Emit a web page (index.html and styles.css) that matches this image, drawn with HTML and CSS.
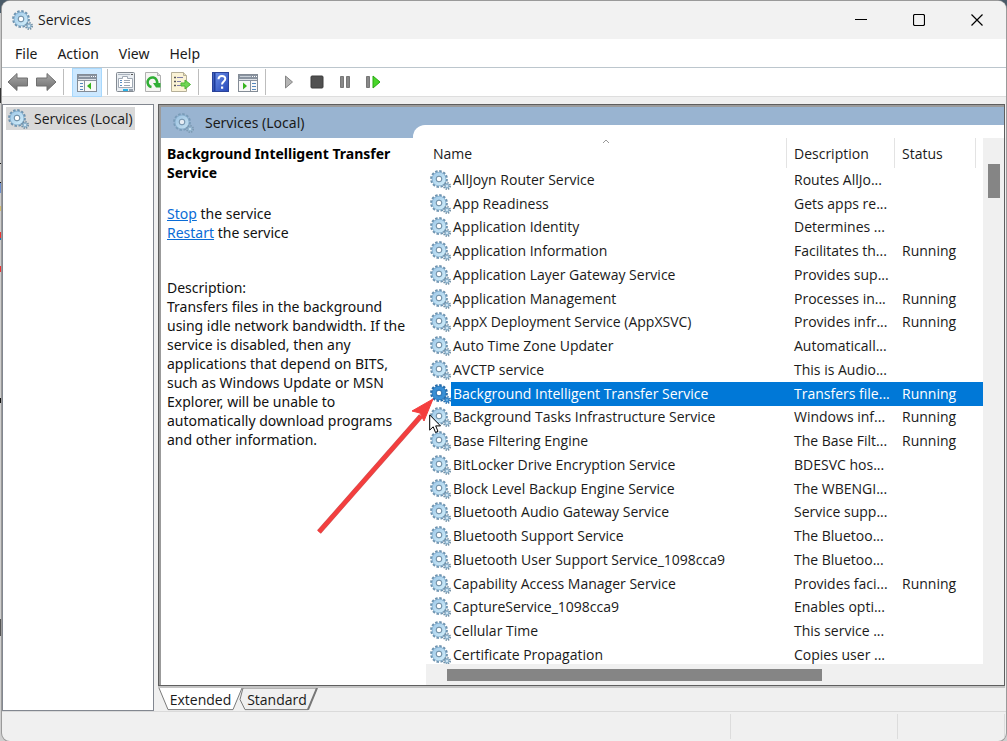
FILE: index.html
```html
<!DOCTYPE html>
<html lang="en">
<head>
<meta charset="UTF-8">
<meta name="viewport" content="width=device-width, initial-scale=1.0">
<title>Services</title>
<link rel="stylesheet" href="styles.css">
</head>
<body>
<svg class="defs" aria-hidden="true">
    <defs>
        <symbol id="gears" viewBox="0 0 21 20">
            <circle cx="9" cy="9" r="7.6" fill="none" stroke="#6f94b0" stroke-width="2.6" stroke-dasharray="2.4 1.58"/>
            <circle cx="9" cy="9" r="5" fill="none" stroke="#7fabcb" stroke-width="4.6"/>
            <circle cx="9" cy="9" r="4.9" fill="none" stroke="url(#ice)" stroke-width="3.4"/>
            <circle cx="9" cy="9" r="2.8" fill="#fff" stroke="#6888a0" stroke-width="1"/>
            <circle cx="17" cy="16" r="3" fill="none" stroke="#6f8da3" stroke-width="2" stroke-dasharray="1.3 1.05"/>
            <circle cx="17" cy="16" r="1.8" fill="#dceefa" stroke="#8fb4cd" stroke-width="1.4"/>
        </symbol>
        <symbol id="gears-selected" viewBox="0 0 21 20">
            <circle cx="9" cy="9" r="7.6" fill="none" stroke="#286ca9" stroke-width="2.6" stroke-dasharray="2.4 1.58"/>
            <circle cx="9" cy="9" r="5" fill="none" stroke="#2574b8" stroke-width="4.6"/>
            <circle cx="9" cy="9" r="4.9" fill="none" stroke="#3a8fd4" stroke-width="3.4"/>
            <circle cx="9" cy="9" r="2.8" fill="#fff" stroke="#1f69ac" stroke-width="1"/>
            <circle cx="17" cy="16" r="3" fill="none" stroke="#286ca9" stroke-width="2" stroke-dasharray="1.3 1.05"/>
            <circle cx="17" cy="16" r="1.8" fill="#6fb0e4" stroke="#3586c9" stroke-width="1.4"/>
        </symbol>
        <linearGradient id="ice" x1="0" y1="0" x2="1" y2="1">
            <stop offset="0" stop-color="#a5cdea"/>
            <stop offset="1" stop-color="#cdeaf8"/>
        </linearGradient>
        <linearGradient id="steel" x1="0" y1="0" x2="0" y2="1">
            <stop offset="0" stop-color="#a8a8a8"/>
            <stop offset="1" stop-color="#6e6e6e"/>
        </linearGradient>
        <linearGradient id="book" x1="0" y1="0" x2="1" y2="1">
            <stop offset="0" stop-color="#6f93ea"/>
            <stop offset="1" stop-color="#2547b8"/>
        </linearGradient>
    </defs>
</svg>
<div class="window">
    <header class="titlebar">
        <svg class="gear"><use href="#gears"/></svg>
        <h1>Services</h1>
        <div class="window-buttons">
            <button aria-label="Minimize"><svg width="12" height="12"><path d="M0 5.500h12" stroke="#000"/></svg></button>
            <button aria-label="Maximize"><svg width="12" height="12"><rect x=".5" y=".5" width="11" height="11" rx="1.5" fill="none" stroke="#000" stroke-width="1.2"/></svg></button>
            <button aria-label="Close"><svg width="12" height="12"><path d="M.5.5l11 11M11.500.5l-11 11" stroke="#000" stroke-width="1.2"/></svg></button>
        </div>
    </header>
    <nav class="menubar">
        <button>File</button>
        <button>Action</button>
        <button>View</button>
        <button>Help</button>
    </nav>
    <div class="toolbar">
        <button aria-label="Back"><svg width="22" height="20"><path d="M1 10L10 1.500V6h10.500v8H10v4.500z" fill="url(#steel)" stroke="#707070"/></svg></button>
        <button aria-label="Forward"><svg width="22" height="20"><path d="M21 10L12 1.500V6H1.500v8H12v4.500z" fill="url(#steel)" stroke="#707070"/></svg></button>
        <span class="divider"></span>
        <button class="pressed" aria-label="Show/Hide Console Tree">
            <svg width="20" height="18">
                <rect x=".5" y=".5" width="19" height="17" fill="#f8f8f8" stroke="#848c96"/>
                <path d="M1 1h18v6H1z" fill="#8993a0"/>
                <path d="M2 2.500h11" stroke="#c9d0d8" stroke-width="1"/>
                <path d="M14 2.500h1M16 2.500h1M18 2.500h1" stroke="#fff"/>
                <path d="M1 5.500h18" stroke="#dfe3e8"/>
                <path d="M7.500 7v10" stroke="#8993a0"/>
                <path d="M3 9.500h3M3 12.500h3M3 15.500h3" stroke="#5588bd"/>
                <path d="M14 8.500v7l-4-3.500z" fill="#36b41d"/>
            </svg>
        </button>
        <span class="divider"></span>
        <button aria-label="Properties">
            <svg width="19" height="20">
                <rect x=".5" y=".5" width="18" height="19" rx="1" fill="#e9edf1" stroke="#838a92"/>
                <path d="M2 2.500h12" stroke="#aab3bd"/>
                <path d="M15 2.500h2" stroke="#555"/>
                <path d="M2.500 6.500h4v-2h5v2h5v9h-14z" fill="#fff" stroke="#a0a9b4"/>
                <path d="M8 8.500h6M8 10.500h6M8 13.500h6" stroke="#9ca6b2"/>
                <path d="M4 8.500h2M4 10.500h2M4 13.500h2" stroke="#5a8fc4"/>
                <path d="M7 18h5" stroke="#28b3e8" stroke-width="2"/>
                <path d="M13 18h4" stroke="#98a2ae" stroke-width="2"/>
            </svg>
        </button>
        <button aria-label="Refresh">
            <svg width="18" height="20">
                <path d="M1.500.5h12l3 3v16h-15z" fill="#f5f5f2" stroke="#b0b0b0"/>
                <path d="M13.500.5v3h3" fill="#ddd" stroke="#b0b0b0"/>
                <path d="M7.500 15A4.800 4.800 0 1 1 13 11.500" fill="none" stroke="#2fae34" stroke-width="2.600"/>
                <path d="M9 11h7.500v4.500H12z" fill="#2fae34"/>
            </svg>
        </button>
        <button aria-label="Export List">
            <svg width="20" height="20">
                <path d="M.5.5h12l3 3v16H.5z" fill="#fbf3d6" stroke="#b5af98"/>
                <path d="M12.500.5v3h3" fill="#e5dcb8" stroke="#b5af98"/>
                <path d="M3 5.500h2M3 9.500h2M3 13.500h2" stroke="#555" stroke-width="1.500"/>
                <path d="M6 5.500h6M6 9.500h4M6 13.500h4" stroke="#7d7ba8"/>
                <path d="M10 11h4V8l5.500 4.500L14 17v-3h-4z" fill="#6fd654" stroke="#4ab533"/>
            </svg>
        </button>
        <span class="divider"></span>
        <button class="help" aria-label="Help">
            <svg width="17" height="20">
                <rect x=".5" y=".5" width="16" height="19" fill="url(#book)" stroke="#2a439a"/>
                <path d="M2.500 1v18" stroke="#1f3c9b" stroke-width="2"/>
                <path d="M6.500 7.200c0-4.300 6.800-4.300 6.800-.4 0 2.700-3.300 2.800-3.300 5.700" fill="none" stroke="#fff" stroke-width="2"/>
                <path d="M9 14.500h2.200v2.200H9z" fill="#fff"/>
            </svg>
        </button>
        <button class="action-pane" aria-label="Show/Hide Action Pane">
            <svg width="20" height="18">
                <rect x=".5" y=".5" width="19" height="17" fill="#f8f8f8" stroke="#848c96"/>
                <path d="M1 1h18v6H1z" fill="#8993a0"/>
                <path d="M2 2.500h11" stroke="#c9d0d8"/>
                <path d="M14 2.500h1M16 2.500h1M18 2.500h1" stroke="#fff"/>
                <path d="M1 5.500h18" stroke="#dfe3e8"/>
                <path d="M12.500 7v10" stroke="#8993a0"/>
                <path d="M14 9.500h4M14 12.500h4M14 15.500h4" stroke="#5588bd"/>
                <path d="M5 8.500v7l4-3.500z" fill="#36b41d"/>
            </svg>
        </button>
        <span class="divider"></span>
        <div class="controls">
            <button aria-label="Start Service"><svg width="14" height="14"><path d="M3.500 1l7 6-7 6z" fill="#b5b5b5" stroke="#858585"/></svg></button>
            <button aria-label="Stop Service"><svg width="14" height="14"><rect x="1" y="1" width="12" height="12" rx="1" fill="#505050" stroke="#3c3c3c"/></svg></button>
            <button aria-label="Pause Service"><svg width="14" height="14"><path d="M2.500 1.500h3v11h-3zM8.500 1.500h3v11h-3z" fill="#888" stroke="#777"/></svg></button>
            <button aria-label="Restart Service"><svg width="16" height="14"><path d="M1.500 1.500h3v11h-3z" fill="#888" stroke="#777"/><path d="M8 1l7 6-7 6z" fill="#48d629" stroke="#28a813"/></svg></button>
        </div>
    </div>
    <main class="workspace">
        <aside class="tree">
            <button class="tree-item"><svg class="gear"><use href="#gears"/></svg>Services (Local)</button>
        </aside>
        <section class="content">
            <div class="pane">
                <div class="info">
                    <h2 class="banner"><svg class="gear"><use href="#gears"/></svg>Services (Local)</h2>
                    <div class="details">
                        <h3>Background Intelligent Transfer Service</h3>
                        <p><a href="#">Stop</a> the service<br><a href="#">Restart</a> the service</p>
                        <p class="description">Description:<br>Transfers files in the background using idle network bandwidth. If the service is disabled, then any applications that depend on BITS, such as Windows Update or MSN Explorer, will be unable to automatically download programs and other information.</p>
                    </div>
                </div>
                <div class="list-panel">
                    <div class="list">
                        <div class="list-view">
                            <table>
                                <colgroup><col><col class="col-description"><col class="col-status"><col class="col-rest"></colgroup>
                                <thead>
                                    <tr><th class="sorted">Name<svg width="8" height="5"><path d="M1 4l3-3 3 3" fill="none" stroke="#999"/></svg></th><th>Description</th><th>Status</th><th></th></tr>
                                </thead>
                                <tbody id="services"></tbody>
                            </table>
                        </div>
                        <div class="scroll-y"><span></span></div>
                        <div class="scroll-x"><span></span></div>
                    </div>
                </div>
            </div>
            <div class="tabs">
                <button class="tab tab-active"><svg viewBox="0 0 85 25" preserveAspectRatio="none"><path d="M1 0l9 22.500h65L84 0" fill="#fff" stroke="#777"/></svg><span>Extended</span></button>
                <button class="tab"><svg viewBox="0 0 80 25" preserveAspectRatio="none"><path d="M4 0h74l-9 22.500H6L1 12z" fill="#f0f0f0" stroke="#777"/><path d="M78 0l-9 22.500" stroke="#777" stroke-width="2"/></svg><span>Standard</span></button>
            </div>
        </section>
    </main>
    <footer class="statusbar"><span></span><span></span><span></span></footer>
</div>
<svg class="arrow" width="118" height="138"><path d="M2 134L104 18" stroke="#c55" stroke-width="5"/><path d="M2 134L104 18" stroke="#f43e3e" stroke-width="4"/><path d="M116 1L95 13l8 2 4 8z" fill="#f43e3e" stroke="#f43e3e"/></svg>
<svg class="cursor" width="13" height="20"><path d="M.7.900v15.200l3.500-3.300 2.300 5.600 2.500-1-2.300-5.500h4.800z" fill="#fff" stroke="#000"/></svg>

<script>
const services = [
    ['AllJoyn Router Service', 'Routes AllJo...', ''],
    ['App Readiness', 'Gets apps re...', ''],
    ['Application Identity', 'Determines ...', ''],
    ['Application Information', 'Facilitates th...', 'Running'],
    ['Application Layer Gateway Service', 'Provides sup...', ''],
    ['Application Management', 'Processes in...', 'Running'],
    ['AppX Deployment Service (AppXSVC)', 'Provides infr...', 'Running'],
    ['Auto Time Zone Updater', 'Automaticall...', ''],
    ['AVCTP service', 'This is Audio...', ''],
    ['Background Intelligent Transfer Service', 'Transfers file...', 'Running'],
    ['Background Tasks Infrastructure Service', 'Windows inf...', 'Running'],
    ['Base Filtering Engine', 'The Base Filt...', 'Running'],
    ['BitLocker Drive Encryption Service', 'BDESVC hos...', ''],
    ['Block Level Backup Engine Service', 'The WBENGI...', ''],
    ['Bluetooth Audio Gateway Service', 'Service supp...', ''],
    ['Bluetooth Support Service', 'The Bluetoo...', ''],
    ['Bluetooth User Support Service_1098cca9', 'The Bluetoo...', ''],
    ['Capability Access Manager Service', 'Provides faci...', 'Running'],
    ['CaptureService_1098cca9', 'Enables opti...', ''],
    ['Cellular Time', 'This service ...', ''],
    ['Certificate Propagation', 'Copies user ...', '']
];
const selected = 9;

document.getElementById('services').innerHTML = services.map(function(service, i) {
    const icon = i === selected ? 'gears-selected' : 'gears';
    return '<tr' + (i === selected ? ' class="selected"' : '') + '>' +
        '<td><div class="name"><svg class="gear"><use href="#' + icon + '"/></svg>' + service[0] + '</div></td>' +
        '<td>' + service[1] + '</td><td>' + service[2] + '</td><td></td></tr>';
}).join('');
</script>
</body>
</html>
```
FILE: styles.css
```css
* {
    box-sizing: border-box;
}
html, body {
    height: 100%;
    margin: 0;
}
body {
    display: flex;
    padding: 1px 1px 0 2px;
    overflow: hidden;
    font-family: "Open Sans", sans-serif;
    font-size: 14px;
    color: #1a1a1a;
    background: linear-gradient(#4a5b69 13px, #c9c9c9 13px, #c9c9c9 88px, #333 88px, #333 103px, #cfcfcf 103px, #cfcfcf 163px, #111 163px, #111 164px, #cfcfcf 164px, #cfcfcf 182px, #111 182px, #111 183px, #6d8fce 183px, #6d8fce 193px, #cfcfcf 193px, #cfcfcf 206px, #d5bd70 206px, #d5bd70 211px, #cfcfcf 211px, #cfcfcf 232px, #e33 232px, #e33 238px, #27a 238px, #27a 240px, #cfcfcf 240px, #cfcfcf 266px, #e33 266px, #e33 272px, #cfcfcf 272px, #cfcfcf 398px, #111 398px, #111 403px, #cfcfcf 403px, #cfcfcf 619px, #555 619px, #555 636px, #cfcfcf 636px);
}
button {
    padding: 0;
    border: none;
    background: none;
    font: inherit;
    color: inherit;
}
h1, h2, h3, p {
    margin: 0;
    font-size: 14px;
    font-weight: normal;
}
svg {
    display: block;
    flex: none;
}
.defs {
    position: absolute;
    width: 0;
    height: 0;
}
.gear {
    width: 21px;
    height: 20px;
}
.window {
    flex: 1;
    min-width: 0;
    display: flex;
    flex-direction: column;
    overflow: hidden;
    background: #f0f0f0;
    border-radius: 8px;
    box-shadow: 0 0 0 1px #9a9a9a;
}

/* title and menu */
.titlebar {
    display: flex;
    align-items: center;
    height: 38px;
    padding-left: 10px;
    gap: 5px;
    line-height: 18px;
    background: #f2f2f2;
}
.window-buttons {
    display: flex;
    margin-left: auto;
    height: 100%;
}
.window-buttons button {
    display: flex;
    align-items: center;
    justify-content: center;
    width: 58px;
}
.menubar {
    display: flex;
    gap: 20px;
    height: 28px;
    padding: 0 13px;
    background: #fff;
    font-family: "Noto Sans", sans-serif;
}
.toolbar {
    display: flex;
    align-items: center;
    height: 30px;
    padding-left: 5px;
    gap: 6px;
    background: #fff;
    border-top: 1px solid #bcc6cd;
    border-bottom: 1px solid #dedede;
}
.divider {
    width: 1px;
    height: 26px;
    background: #bdbdbd;
}
.toolbar button {
    display: flex;
    align-items: center;
    justify-content: center;
    min-width: 22px;
    height: 27px;
}
.toolbar .pressed {
    width: 28px;
    margin-left: 3px;
    padding-top: 2px;
    background: #cce8ff;
    box-shadow: 0 0 0 1px #a8d8fc;
}
.toolbar .help {
    margin-left: 4px;
}
.toolbar .action-pane {
    padding-top: 2px;
}
.controls {
    display: flex;
    gap: 6px;
    margin-left: 6px;
}

/* panes */
.workspace {
    flex: 1;
    min-height: 0;
    display: flex;
    gap: 4px;
    padding: 7px 0 0;
    border-bottom: 1px solid #dadada;
}
.tree {
    width: 152px;
    padding: 2px 3px;
    background: #fff;
    border: 1px solid #828790;
}
.tree-item {
    display: flex;
    align-items: center;
    gap: 5px;
    height: 23px;
    padding: 0 2px;
    background: #d9d9d9;
}
.content {
    flex: 1;
    min-width: 0;
    display: flex;
    flex-direction: column;
    padding-right: 1px;
}
.pane {
    flex: 1;
    min-height: 0;
    display: flex;
    background: #99b4d1;
    border: 1px solid #5f5f5f;
    box-shadow: inset 2px 2px #9b9b9b;
    padding: 2px 0 0 2px;
}
.info {
    width: 252px;
    display: flex;
    flex-direction: column;
}
.banner {
    display: flex;
    align-items: center;
    gap: 11px;
    height: 31px;
    padding-left: 12px;
    font-family: "Noto Sans", sans-serif;
}
.banner .gear {
    opacity: 0.75;
}
.details {
    flex: 1;
    padding: 6px 6px;
    line-height: 19px;
    font-family: "Noto Sans", sans-serif;
    background: #fff;
    color: #111;
}
.details h3 {
    margin-bottom: 22px;
    font-weight: bold;
    color: #000;
}
.details a {
    color: #0a6cd6;
}
.description {
    margin-top: 36px;
}
.list-panel {
    flex: 1;
    min-width: 0;
    display: flex;
    margin-top: 18px;
    padding: 13px 0 0 13px;
    background: #fff;
    border-top-left-radius: 12px;
}
.list {
    flex: 1;
    min-width: 0;
    display: grid;
    grid-template-columns: 1fr 21px;
    grid-template-rows: 1fr 21px;
    background: #f0f0f0;
}
.list-view {
    min-height: 0;
    overflow: hidden;
    background: #fff;
}
table {
    width: 100%;
    height: calc(100% + 3px);
    table-layout: fixed;
    border-collapse: separate;
    border-spacing: 0;
    line-height: 20px;
}
.col-description {
    width: 108px;
}
.col-status {
    width: 81px;
}
.col-rest {
    width: 7px;
}
th {
    position: relative;
    height: 30px;
    padding: 2px 7px 0;
    font-weight: normal;
    text-align: left;
    border-right: 1px solid #e3e3e3;
}
th:last-child {
    padding: 0;
    border: none;
}
th svg {
    position: absolute;
    top: 1px;
    left: 49%;
}
td {
    padding: 0 0 0 7px;
    white-space: nowrap;
}
td:first-child {
    padding-left: 4px;
}
.name {
    display: flex;
    gap: 2px;
}
.selected td {
    color: #fff;
    background: #0078d7;
}
.selected td:first-child {
    background: linear-gradient(to right, #fff 25px, #0078d7 25px);
}
.scroll-y {
    padding: 26px 4px 0 5px;
}
.scroll-y span {
    display: block;
    height: 34px;
    background: #858585;
}
.scroll-x {
    padding: 5px 0 4px 21px;
}
.scroll-x span {
    display: block;
    width: 70%;
    height: 12px;
    background: #858585;
}

/* bottom */
.tabs {
    display: flex;
    height: 25px;
    border-top: 2px solid #c4c4c4;
}
.tab {
    position: relative;
    width: 80px;
    height: 24px;
    margin-left: -4px;
    padding: 0 4px 2px 0;
}
.tab-active {
    z-index: 1;
    width: 85px;
    margin-left: 0;
    padding-right: 0;
}
.tab svg {
    position: absolute;
    inset: 0;
    width: 100%;
    height: 100%;
}
.tab span {
    position: relative;
}
.statusbar {
    display: flex;
    height: 29px;
    padding: 2px 1px 2px 0;
}
.statusbar span {
    width: 167px;
    border-right: 1px solid #dcdcdc;
}
.statusbar span:first-child {
    flex: 1;
}
.statusbar span:last-child {
    width: 107px;
}

/* pointer callout */
.arrow {
    position: absolute;
    left: 317px;
    top: 398px;
}
.cursor {
    position: absolute;
    left: 429px;
    top: 414px;
}
```
